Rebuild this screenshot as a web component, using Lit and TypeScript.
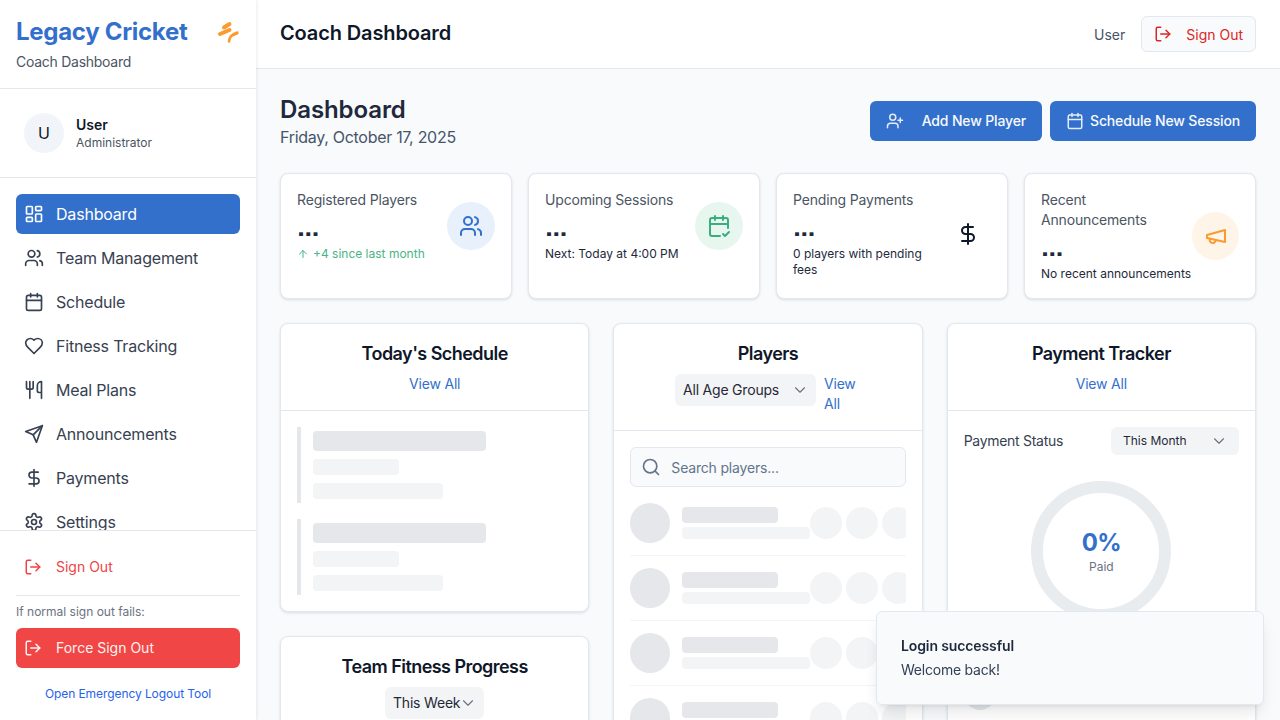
import { LitElement, html, css, svg } from 'lit';
import { customElement } from 'lit/decorators.js';

const icon = (paths: unknown, size = 20, sw = 2) => html`<svg
  width=${size}
  height=${size}
  viewBox="0 0 24 24"
  fill="none"
  stroke="currentColor"
  stroke-width=${sw}
  stroke-linecap="round"
  stroke-linejoin="round"
>${paths}</svg>`;

const icons = {
  dashboard: svg`<rect x="3" y="3" width="7" height="9" rx="1"/><rect x="14" y="3" width="7" height="5" rx="1"/><rect x="14" y="12" width="7" height="9" rx="1"/><rect x="3" y="16" width="7" height="5" rx="1"/>`,
  users: svg`<path d="M16 21v-2a4 4 0 0 0-4-4H6a4 4 0 0 0-4 4v2"/><circle cx="9" cy="7" r="4"/><path d="M22 21v-2a4 4 0 0 0-3-3.87"/><path d="M16 3.13a4 4 0 0 1 0 7.75"/>`,
  calendar: svg`<path d="M8 2v4"/><path d="M16 2v4"/><rect x="3" y="4" width="18" height="18" rx="2"/><path d="M3 10h18"/>`,
  calendarCheck: svg`<path d="M8 2v4"/><path d="M16 2v4"/><path d="M21 14V6a2 2 0 0 0-2-2H5a2 2 0 0 0-2 2v14a2 2 0 0 0 2 2h8"/><path d="M3 10h18"/><path d="m16 20 2 2 4-4"/>`,
  heart: svg`<path d="M19 14c1.49-1.46 3-3.21 3-5.5A5.5 5.5 0 0 0 16.5 3c-1.76 0-3 .5-4.5 2-1.5-1.5-2.74-2-4.5-2A5.5 5.5 0 0 0 2 8.5c0 2.3 1.5 4.05 3 5.5l7 7Z"/>`,
  utensils: svg`<path d="M3 2v7c0 1.1.9 2 2 2h4a2 2 0 0 0 2-2V2"/><path d="M7 2v20"/><path d="M21 15V2a5 5 0 0 0-5 5v6c0 1.1.9 2 2 2h3Zm0 0v7"/>`,
  send: svg`<path d="m22 2-7 20-4-9-9-4Z"/><path d="M22 2 11 13"/>`,
  dollar: svg`<line x1="12" x2="12" y1="2" y2="22"/><path d="M17 5H9.5a3.5 3.5 0 0 0 0 7h5a3.5 3.5 0 0 1 0 7H6"/>`,
  settings: svg`<path d="M12.22 2h-.44a2 2 0 0 0-2 2v.18a2 2 0 0 1-1 1.73l-.43.25a2 2 0 0 1-2 0l-.15-.08a2 2 0 0 0-2.73.73l-.22.38a2 2 0 0 0 .73 2.73l.15.1a2 2 0 0 1 1 1.72v.51a2 2 0 0 1-1 1.74l-.15.09a2 2 0 0 0-.73 2.73l.22.38a2 2 0 0 0 2.73.73l.15-.08a2 2 0 0 1 2 0l.43.25a2 2 0 0 1 1 1.73V20a2 2 0 0 0 2 2h.44a2 2 0 0 0 2-2v-.18a2 2 0 0 1 1-1.73l.43-.25a2 2 0 0 1 2 0l.15.08a2 2 0 0 0 2.73-.73l.22-.39a2 2 0 0 0-.73-2.73l-.15-.08a2 2 0 0 1-1-1.74v-.5a2 2 0 0 1 1-1.74l.15-.09a2 2 0 0 0 .73-2.73l-.22-.38a2 2 0 0 0-2.73-.73l-.15.08a2 2 0 0 1-2 0l-.43-.25a2 2 0 0 1-1-1.73V4a2 2 0 0 0-2-2z"/><circle cx="12" cy="12" r="3"/>`,
  logout: svg`<path d="M9 21H5a2 2 0 0 1-2-2V5a2 2 0 0 1 2-2h4"/><polyline points="16 17 21 12 16 7"/><line x1="21" x2="9" y1="12" y2="12"/>`,
  userPlus: svg`<path d="M16 21v-2a4 4 0 0 0-4-4H6a4 4 0 0 0-4 4v2"/><circle cx="9" cy="7" r="4"/><line x1="19" x2="19" y1="8" y2="14"/><line x1="22" x2="16" y1="11" y2="11"/>`,
  megaphone: svg`<path d="m3 11 18-5v12L3 14v-3z"/><path d="M11.6 16.8a3 3 0 1 1-5.8-1.6"/>`,
  arrowUp: svg`<path d="m5 12 7-7 7 7"/><path d="M12 19V5"/>`,
  chevron: svg`<path d="m6 9 6 6 6-6"/>`,
  search: svg`<circle cx="11" cy="11" r="8"/><path d="m21 21-4.3-4.3"/>`,
  // cricket bat logo, drawn from the crop
  logo: svg`<path d="M8 7.5 13.5 4" stroke-width="4"/><path d="M4 14 13.5 10" stroke-width="4"/><path d="M13 21.5c.2-2.4 1.2-5 3.5-6.5" stroke-width="2.6"/><path d="M17.5 14.5 21 13" stroke-width="3.4"/>`,
};

const nav = [
  ['Dashboard', icons.dashboard],
  ['Team Management', icons.users],
  ['Schedule', icons.calendar],
  ['Fitness Tracking', icons.heart],
  ['Meal Plans', icons.utensils],
  ['Announcements', icons.send],
  ['Payments', icons.dollar],
  ['Settings', icons.settings],
] as const;

@customElement('app-sidebar')
export class AppSidebar extends LitElement {
  static styles = css`
    :host {
      display: flex;
      flex-direction: column;
      width: 256px;
      height: 720px;
      flex: none;
      background: white;
      box-shadow: 1px 0 3px rgba(15, 23, 42, 0.08);
      position: relative;
      z-index: 2;
      color: #334155;
    }
    .brand {
      height: 56px;
      padding: 16px;
      border-bottom: 1px solid #e5e7eb;
    }
    .brand-row {
      display: flex;
      justify-content: space-between;
      align-items: center;
      height: 32px;
    }
    .brand h1 {
      margin: 0;
      font-size: 24px;
      line-height: 32px;
      font-weight: 700;
      letter-spacing: -0.3px;
      color: #3370cc;
    }
    .logo {
      color: #fb9a2d;
      display: flex;
    }
    .brand p {
      margin: 4px 0 0;
      font-size: 14px;
      line-height: 20px;
      letter-spacing: -0.27px;
      color: #4b5563;
    }
    .user {
      display: flex;
      align-items: center;
      gap: 12px;
      padding: 24px;
      border-bottom: 1px solid #e5e7eb;
    }
    .avatar {
      width: 40px;
      height: 40px;
      border-radius: 50%;
      background: #f1f5f9;
      color: #0f172a;
      display: flex;
      align-items: center;
      justify-content: center;
      font-size: 16px;
    }
    .user b {
      display: block;
      font-size: 14px;
      line-height: 20px;
      font-weight: 600;
      color: #0f172a;
    }
    .user span {
      display: block;
      font-size: 12px;
      line-height: 16px;
      color: #4b5563;
    }
    nav {
      flex: 1;
      min-height: 0;
      overflow: hidden;
      padding: 16px;
      display: flex;
      flex-direction: column;
      gap: 4px;
    }
    nav a {
      flex: none;
      display: flex;
      align-items: center;
      gap: 12px;
      height: 40px;
      padding: 0 8px;
      border-radius: 6px;
      font-size: 16px;
      letter-spacing: -0.2px;
      color: #374151;
    }
    nav a.active {
      background: #3370cc;
      color: white;
    }
    .foot {
      border-top: 1px solid #e5e7eb;
      padding: 16px 16px 18px;
      flex: none;
    }
    .row {
      display: flex;
      align-items: center;
      gap: 14px;
      height: 40px;
      padding: 0 8px;
      border-radius: 6px;
      font-size: 14px;
    }
    .row span {
      padding-bottom: 2px;
    }
    .row.out {
      color: #ef4444;
    }
    .divider {
      border-top: 1px solid #e5e7eb;
      margin-top: 8px;
      padding-top: 8px;
      font-size: 12px;
      line-height: 16px;
      color: #6b7280;
    }
    .row.force {
      margin-top: 8px;
      background: #f14646;
      color: #fdf2f2;
    }
    .link {
      margin-top: 18px;
      text-align: center;
      font-size: 12px;
      line-height: 16px;
      letter-spacing: -0.08px;
      color: #2563eb;
    }
  `;

  render() {
    return html`
      <div class="brand">
        <div class="brand-row">
          <h1>Legacy Cricket</h1>
          <span class="logo">${icon(icons.logo, 24)}</span>
        </div>
        <p>Coach Dashboard</p>
      </div>
      <div class="user">
        <div class="avatar">U</div>
        <div><b>User</b><span>Administrator</span></div>
      </div>
      <nav>
        ${nav.map(
          ([label, i], idx) =>
            html`<a class=${idx === 0 ? 'active' : ''}>${icon(i)}${label}</a>`
        )}
      </nav>
      <div class="foot">
        <div class="row out">${icon(icons.logout, 18)}<span>Sign Out</span></div>
        <div class="divider">If normal sign out fails:</div>
        <div class="row force">${icon(icons.logout, 18)}<span>Force Sign Out</span></div>
        <div class="link">Open Emergency Logout Tool</div>
      </div>
    `;
  }
}

@customElement('app-root')
export class AppRoot extends LitElement {
  static styles = css`
    :host {
      display: flex;
      width: 1280px;
      height: 720px;
      overflow: hidden;
      font-family: Inter, 'Liberation Sans', sans-serif;
      background: #f8fafc;
      color: #0f172a;
    }
    .page {
      flex: 1;
      min-width: 0;
      display: flex;
      flex-direction: column;
    }
    header {
      flex: none;
      height: 68px;
      border-bottom: 1px solid #e2e8f0;
      background: white;
      display: flex;
      align-items: center;
      justify-content: space-between;
      padding: 0 24px;
    }
    header h2 {
      margin: 0 0 2px;
      font-size: 20px;
      line-height: 28px;
      font-weight: 600;
      letter-spacing: -0.13px;
    }
    .head-right {
      display: flex;
      align-items: center;
      gap: 16px;
      font-size: 14px;
      color: #475569;
    }
    .ghost {
      display: flex;
      align-items: center;
      gap: 14px;
      height: 34px;
      padding: 0 12px;
      border: 1px solid #e2e8f0;
      border-radius: 6px;
      background: #f8fafc;
      color: #dc2626;
    }
    main {
      flex: 1;
      min-height: 0;
      overflow: hidden;
      padding: 24px;
    }
    .title {
      display: flex;
      justify-content: space-between;
      align-items: center;
      margin-bottom: 24px;
    }
    .title h1 {
      margin: 0;
      padding-top: 2px;
      font-size: 24px;
      line-height: 30px;
      font-weight: 600;
      letter-spacing: -0.1px;
      color: #1e293b;
    }
    .title p {
      margin: 0;
      font-size: 16px;
      line-height: 24px;
      letter-spacing: -0.29px;
      color: #475569;
    }
    .actions {
      display: flex;
      gap: 8px;
    }
    .btn {
      display: flex;
      align-items: center;
      height: 40px;
      padding: 0 16px;
      border-radius: 6px;
      background: #3370cc;
      color: #f8fafc;
      font-size: 14px;
      font-weight: 500;
      letter-spacing: -0.15px;
    }
    .btn span {
      padding-bottom: 2px;
    }
    .btn svg {
      opacity: 0.9;
    }
    .btn.add {
      gap: 18px;
    }
    .btn.plan {
      gap: 6px;
    }
    .stats {
      display: grid;
      grid-template-columns: repeat(4, minmax(0, 1fr));
      gap: 16px;
      margin-bottom: 24px;
    }
    .stat {
      background: white;
      border: 1px solid #e2e8f0;
      border-radius: 8px;
      box-shadow: 0 1px 3px rgba(15, 23, 42, 0.12);
      padding: 16px;
    }
    .stat-row {
      display: flex;
      align-items: center;
      justify-content: space-between;
    }
    .stat h3 {
      margin: 0;
      font-size: 14px;
      line-height: 20px;
      font-weight: 400;
      letter-spacing: -0.17px;
      color: #4b5563;
    }
    .stat .val {
      font-size: 24px;
      line-height: 32px;
      font-weight: 700;
      font-feature-settings: 'ss07';
      letter-spacing: -0.8px;
      color: #1e293b;
      margin: 2px 0;
    }
    .stat small {
      display: block;
      font-size: 12px;
      line-height: 16px;
      color: #1e293b;
    }
    .stat small.up {
      display: flex;
      align-items: center;
      gap: 4px;
      color: #48b585;
    }
    .badge {
      flex: 0 1 48px;
      height: 48px;
      border-radius: 50%;
      display: flex;
      align-items: center;
      justify-content: center;
    }
    .cols {
      display: grid;
      grid-template-columns: repeat(3, minmax(0, 1fr));
      gap: 24px;
      align-items: start;
    }
    .col {
      display: flex;
      flex-direction: column;
      gap: 24px;
    }
    .card {
      background: white;
      border: 1px solid #e2e8f0;
      border-radius: 8px;
      box-shadow: 0 1px 3px rgba(15, 23, 42, 0.12);
      overflow: hidden;
    }
    .card-head {
      padding: 16px;
      border-bottom: 1px solid #e2e8f0;
      text-align: center;
    }
    .card-head h3 {
      margin: 0;
      font-size: 18px;
      line-height: 28px;
      font-weight: 600;
      letter-spacing: -0.55px;
      color: #0f172a;
    }
    .view {
      display: block;
      margin-top: 6px;
      font-size: 14px;
      line-height: 20px;
      letter-spacing: -0.2px;
      color: #3370cc;
    }
    .filter {
      display: flex;
      justify-content: center;
      gap: 8px;
      align-items: flex-start;
      margin-top: 6px;
    }
    .filter .view {
      margin-top: 0;
      text-align: left;
      width: 37px;
    }
    .select {
      display: inline-flex;
      align-items: center;
      justify-content: space-between;
      height: 32px;
      padding: 0 8px;
      background: #f3f4f6;
      border-radius: 6px;
      font-size: 14px;
      letter-spacing: -0.2px;
      color: #1f2937;
      box-sizing: border-box;
    }
    .select span {
      padding-bottom: 2px;
    }
    .select svg {
      color: #6b7280;
      margin: 0 -1px;
    }
    .select.wide {
      width: 141px;
    }
    .select.small {
      width: 128px;
      height: 28px;
      font-size: 12px;
      letter-spacing: 0;
      padding: 0 12px;
    }
    .body {
      padding: 16px;
    }
    .sk {
      border-radius: 4px;
      background: #f3f4f6;
    }
    .sk.dark {
      background: #e5e7eb;
    }
    .sched {
      border-left: 4px solid #e5e7eb;
      padding: 4px 0 4px 12px;
      display: flex;
      flex-direction: column;
      gap: 8px;
    }
    .sched + .sched {
      margin-top: 16px;
    }
    .search {
      display: flex;
      align-items: center;
      gap: 10px;
      height: 38px;
      padding: 0 10px;
      margin-bottom: 4px;
      border: 1px solid #e2e8f0;
      border-radius: 6px;
      background: #f8fafc;
      font-size: 14px;
      letter-spacing: -0.18px;
      color: #64748b;
    }
    .player {
      display: flex;
      align-items: center;
      gap: 12px;
      padding: 12px 0;
      border-bottom: 1px solid #f1f5f9;
      overflow: hidden;
    }
    .a {
      flex: none;
      width: 40px;
      height: 40px;
      border-radius: 50%;
      background: #e5e7eb;
    }
    .t {
      flex: none;
      width: 128px;
      display: flex;
      flex-direction: column;
      gap: 4px;
    }
    .c {
      display: flex;
      gap: 4px;
      flex: none;
      margin-left: -12px;
    }
    .c i {
      display: block;
      width: 32px;
      height: 32px;
      border-radius: 50%;
      background: #f3f4f6;
    }
    .pay-row {
      display: flex;
      align-items: center;
      justify-content: space-between;
      font-size: 14px;
      letter-spacing: -0.29px;
      color: #374151;
    }
    .pay-row > span {
      padding-bottom: 2px;
    }
    .donut {
      box-sizing: border-box;
      width: 140px;
      height: 140px;
      margin: 26px auto 0;
      border: 12px solid #e9ecef;
      border-radius: 50%;
      display: flex;
      flex-direction: column;
      align-items: center;
      justify-content: center;
    }
    .donut b {
      font-size: 24px;
      line-height: 32px;
      font-weight: 700;
      letter-spacing: -0.8px;
      color: #3370cc;
    }
    .donut span {
      font-size: 12px;
      line-height: 16px;
      color: #6b7280;
    }
    .pay-item {
      display: flex;
      align-items: center;
      gap: 12px;
      margin-top: 57px;
    }
    .pay-item .a {
      width: 32px;
      height: 32px;
    }
    .toast {
      position: fixed;
      right: 16px;
      bottom: 15px;
      width: 388px;
      box-sizing: border-box;
      padding: 24px;
      background: #f8fafc;
      border: 1px solid #e2e8f0;
      border-radius: 6px;
      box-shadow: 0 10px 15px -3px rgba(0, 0, 0, 0.1),
        0 4px 6px -4px rgba(0, 0, 0, 0.1);
      z-index: 5;
    }
    .toast b {
      display: block;
      font-size: 14px;
      line-height: 20px;
      font-weight: 600;
      letter-spacing: -0.12px;
      color: #1e293b;
    }
    .toast span {
      display: block;
      margin-top: 4px;
      font-size: 14px;
      line-height: 20px;
      letter-spacing: -0.23px;
      color: #334155;
    }
  `;

  private stat(
    title: unknown,
    sub: unknown,
    badge: unknown,
    bg: string,
    color: string
  ) {
    return html`<div class="stat">
      <div class="stat-row">
        <div>
          <h3>${title}</h3>
          <div class="val">...</div>
          ${sub}
        </div>
        <div class="badge" style="background:${bg};color:${color}">${badge}</div>
      </div>
    </div>`;
  }

  private schedItem() {
    return html`<div class="sched">
      <div class="sk dark" style="width:173px;height:20px"></div>
      <div class="sk" style="width:86px;height:16px"></div>
      <div class="sk" style="width:130px;height:16px"></div>
    </div>`;
  }

  private player() {
    return html`<div class="player">
      <div class="a"></div>
      <div class="t">
        <div class="sk dark" style="width:96px;height:16px"></div>
        <div class="sk" style="width:128px;height:12px"></div>
      </div>
      <div class="c"><i></i><i></i><i></i></div>
    </div>`;
  }

  private select(label: string, cls = '') {
    return html`<div class="select ${cls}">
      <span>${label}</span>${icon(icons.chevron, 18, 1.5)}
    </div>`;
  }

  render() {
    return html`
      <app-sidebar></app-sidebar>
      <div class="page">
        <header>
          <h2>Coach Dashboard</h2>
          <div class="head-right">
            <span>User</span>
            <div class="ghost">${icon(icons.logout, 18)}<span>Sign Out</span></div>
          </div>
        </header>
        <main>
          <div class="title">
            <div>
              <h1>Dashboard</h1>
              <p>Friday, October 17, 2025</p>
            </div>
            <div class="actions">
              <div class="btn add">${icon(icons.userPlus, 18)}<span>Add New Player</span></div>
              <div class="btn plan">${icon(icons.calendar, 18)}<span>Schedule New Session</span></div>
            </div>
          </div>
          <div class="stats">
            ${this.stat(
              'Registered Players',
              html`<small class="up">${icon(icons.arrowUp, 12)}+4 since last month</small>`,
              icon(icons.users, 24),
              '#e8f0fb',
              '#3370cc'
            )}
            ${this.stat(
              'Upcoming Sessions',
              html`<small>Next: Today at 4:00 PM</small>`,
              icon(icons.calendarCheck, 24),
              '#e8f6f0',
              '#3aaf7c'
            )}
            ${this.stat(
              'Pending Payments',
              html`<small>0 players with pending fees</small>`,
              icon(icons.dollar, 24),
              'transparent',
              '#0f172a'
            )}
            ${this.stat(
              'Recent Announcements',
              html`<small>No recent announcements</small>`,
              icon(icons.megaphone, 24),
              '#fff4e8',
              '#fb9a2d'
            )}
          </div>
          <div class="cols">
            <div class="col">
              <section class="card">
                <div class="card-head">
                  <h3>Today's Schedule</h3>
                  <a class="view">View All</a>
                </div>
                <div class="body">${this.schedItem()}${this.schedItem()}</div>
              </section>
              <section class="card">
                <div class="card-head">
                  <h3>Team Fitness Progress</h3>
                  <div class="filter">${this.select('This Week')}</div>
                </div>
              </section>
            </div>
            <div class="col">
              <section class="card">
                <div class="card-head">
                  <h3>Players</h3>
                  <div class="filter">
                    ${this.select('All Age Groups', 'wide')}
                    <a class="view">View All</a>
                  </div>
                </div>
                <div class="body">
                  <div class="search">${icon(icons.search, 20, 2)}<span>Search players...</span></div>
                  ${this.player()}${this.player()}${this.player()}${this.player()}
                </div>
              </section>
            </div>
            <div class="col">
              <section class="card">
                <div class="card-head">
                  <h3>Payment Tracker</h3>
                  <a class="view">View All</a>
                </div>
                <div class="body">
                  <div class="pay-row">
                    <span>Payment Status</span>
                    ${this.select('This Month', 'small')}
                  </div>
                  <div class="donut"><b>0%</b><span>Paid</span></div>
                  <div class="pay-item">
                    <div class="a"></div>
                    <div class="sk dark" style="width:128px;height:16px"></div>
                  </div>
                </div>
              </section>
            </div>
          </div>
        </main>
      </div>
      <div class="toast">
        <b>Login successful</b>
        <span>Welcome back!</span>
      </div>
    `;
  }
}
